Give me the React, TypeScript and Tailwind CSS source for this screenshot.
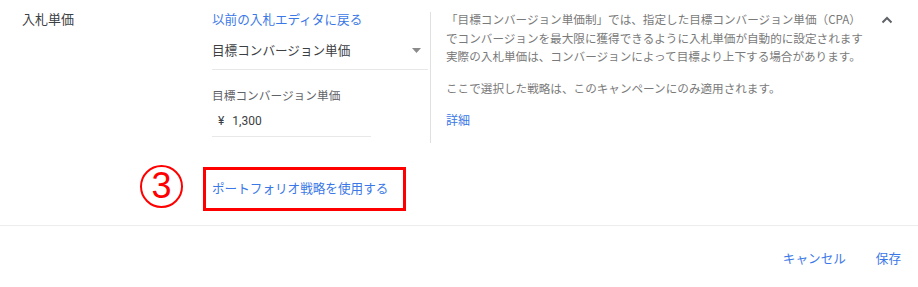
import React from "react";

export default function App() {
  return (
    <div className="w-[918px] h-[287px] bg-white overflow-hidden font-['Noto_Sans_CJK_JP','Noto_Sans',sans-serif]">
      <div className="flex h-[143px] pt-[10px]">
        <div className="w-[212px] pl-[22px] text-[13px] leading-[18px] text-[#3c4043]">入札単価</div>
        <div className="w-[218px] flex flex-col">
          <div className="text-[12.6px] leading-[18px] text-[#3b78e7] whitespace-nowrap">以前の入札エディタに戻る</div>
          <div className="mt-[13px] w-[216px] flex items-center justify-between pb-[10px] border-b border-[#e8e8e8]">
            <span className="text-[12.6px] leading-[18px] text-[#3c4043] whitespace-nowrap">目標コンバージョン単価</span>
            <svg width="9" height="5" viewBox="0 0 9 5" className="mr-[7px]">
              <path d="M0 0 L9 0 L4.5 5 Z" fill="#8a8a8a" />
            </svg>
          </div>
          <div className="mt-[16px] text-[11.7px] leading-[18px] text-[#5f6368] whitespace-nowrap">目標コンバージョン単価</div>
          <div className="mt-[8px] w-[159px] h-[25px] pl-[6px] flex items-start border-b border-[#e8e8e8] text-[12px] leading-[18px] text-[#3c4043] font-['Roboto',sans-serif]">
            <span>¥</span>
            <span className="ml-[8px]">1,300</span>
          </div>
        </div>
        <div className="w-px h-[131px] mt-[2px] bg-[#e0e0e0]" />
        <div className="pl-[15px] w-[436px] text-[11.6px] leading-[18.5px] text-[#7a7a7a] whitespace-nowrap">
          <div>「目標コンバージョン単価制」では、指定した目標コンバージョン単価（CPA）</div>
          <div>でコンバージョンを最大限に獲得できるように入札単価が自動的に設定されます</div>
          <div>実際の入札単価は、コンバージョンによって目標より上下する場合があります。</div>
          <div className="mt-[13px]">ここで選択した戦略は、このキャンペーンにのみ適用されます。</div>
          <div className="mt-[14px] text-[12px] text-[#3b78e7]">詳細</div>
        </div>
        <div className="pl-[14px] pt-[6px]">
          <svg width="12" height="8" viewBox="0 0 12 8">
            <path d="M1.5 6.5 L6 2 L10.5 6.5" fill="none" stroke="#5f6368" strokeWidth="2" />
          </svg>
        </div>
      </div>
      <div className="flex items-start mt-[22px] pl-[140px]">
        <div className="w-[43px] h-[43px] rounded-full border-2 border-[#ff0000] flex items-center justify-center text-[#ff0000] text-[36px] leading-none font-['Liberation_Sans',sans-serif]">
          <span className="-mt-[1px]">3</span>
        </div>
        <div className="ml-[20px] mt-[2px] w-[203px] h-[44px] border-[3px] border-[#ff0000] pl-[6px] pb-[2px] flex items-center">
          <span className="text-[12.6px] leading-[18px] text-[#3b78e7] whitespace-nowrap">ポートフォリオ戦略を使用する</span>
        </div>
      </div>
      <div className="mt-[14px] h-px bg-[#ececec]" />
      <div className="mt-[23px] flex justify-end pr-[17px] gap-[30px] text-[12.6px] leading-[18px] text-[#3b78e7]">
        <span>キャンセル</span>
        <span>保存</span>
      </div>
    </div>
  );
}
